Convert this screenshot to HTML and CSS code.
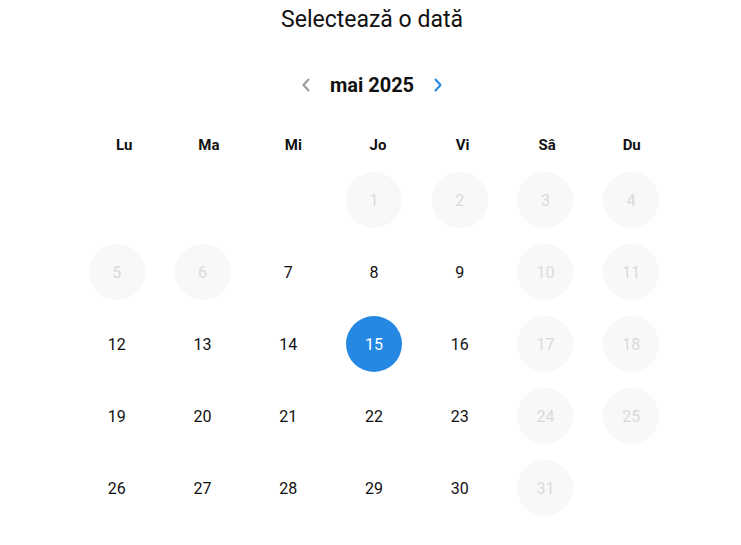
FILE: index.html
```html
<!DOCTYPE html>
<html lang="ro">
<head>
<meta charset="utf-8">
<title>Selectează o dată</title>
<link rel="stylesheet" href="styles.css">
</head>
<body>
<div class="picker">
  <h1 class="title">Selectează o dată</h1>
  <div class="nav">
    <button class="arrow prev" aria-label="Luna anterioară">
      <svg width="10" height="14" viewBox="0 0 10 14"><path d="M7.5 1.5 L2.5 7 L7.5 12.5" fill="none" stroke="currentColor" stroke-width="2" stroke-linecap="round" stroke-linejoin="round"/></svg>
    </button>
    <span class="month">mai 2025</span>
    <button class="arrow next" aria-label="Luna următoare">
      <svg width="10" height="14" viewBox="0 0 10 14"><path d="M2.5 1.5 L7.5 7 L2.5 12.5" fill="none" stroke="currentColor" stroke-width="2" stroke-linecap="round" stroke-linejoin="round"/></svg>
    </button>
  </div>
  <div class="weekdays">
    <span>Lu</span><span>Ma</span><span>Mi</span><span>Jo</span><span>Vi</span><span>Sâ</span><span>Du</span>
  </div>
  <div class="days">
    <span class="cell"></span><span class="cell"></span><span class="cell"></span>
    <span class="cell"><span class="day off">1</span></span>
    <span class="cell"><span class="day off">2</span></span>
    <span class="cell"><span class="day off">3</span></span>
    <span class="cell"><span class="day off">4</span></span>
    <span class="cell"><span class="day off">5</span></span>
    <span class="cell"><span class="day off">6</span></span>
    <span class="cell"><span class="day">7</span></span>
    <span class="cell"><span class="day">8</span></span>
    <span class="cell"><span class="day">9</span></span>
    <span class="cell"><span class="day off">10</span></span>
    <span class="cell"><span class="day off">11</span></span>
    <span class="cell"><span class="day">12</span></span>
    <span class="cell"><span class="day">13</span></span>
    <span class="cell"><span class="day">14</span></span>
    <span class="cell"><span class="day selected">15</span></span>
    <span class="cell"><span class="day">16</span></span>
    <span class="cell"><span class="day off">17</span></span>
    <span class="cell"><span class="day off">18</span></span>
    <span class="cell"><span class="day">19</span></span>
    <span class="cell"><span class="day">20</span></span>
    <span class="cell"><span class="day">21</span></span>
    <span class="cell"><span class="day">22</span></span>
    <span class="cell"><span class="day">23</span></span>
    <span class="cell"><span class="day off">24</span></span>
    <span class="cell"><span class="day off">25</span></span>
    <span class="cell"><span class="day">26</span></span>
    <span class="cell"><span class="day">27</span></span>
    <span class="cell"><span class="day">28</span></span>
    <span class="cell"><span class="day">29</span></span>
    <span class="cell"><span class="day">30</span></span>
    <span class="cell"><span class="day off">31</span></span>
    <span class="cell"></span>
  </div>
</div>
</body>
</html>
```
FILE: styles.css
```css
* { box-sizing: border-box; }
html, body { margin: 0; padding: 0; background: #fff; }
body {
  font-family: Roboto, "Liberation Sans", Arial, sans-serif;
  color: #111;
}
.picker {
  width: 600px;
  margin-left: 74px;
}
.title {
  margin: 0;
  padding-right: 4px;
  height: 40px;
  line-height: 40px;
  text-align: center;
  font-size: 23px;
  font-weight: 400;
  color: #111;
}
.nav {
  margin-top: 25px;
  padding-right: 4px;
  height: 40px;
  display: flex;
  align-items: center;
  justify-content: center;
  gap: 18px;
}
.arrow {
  border: 0;
  background: none;
  padding: 0;
  width: 12px;
  height: 20px;
  display: flex;
  align-items: center;
  justify-content: center;
  cursor: pointer;
}
.prev { color: #9a9a9a; }
.next { color: #2589e4; }
.month {
  font-size: 20px;
  font-weight: 700;
  color: #111;
}
.weekdays {
  margin-top: 25px;
  margin-left: 8px;
  height: 30px;
  display: grid;
  grid-template-columns: repeat(7, 1fr);
  align-items: center;
  text-align: center;
  font-size: 15px;
  font-weight: 700;
  color: #111;
}
.days {
  margin-top: 4px;
  display: grid;
  grid-template-columns: repeat(7, 1fr);
  grid-auto-rows: 72px;
}
.cell {
  display: flex;
  align-items: center;
  justify-content: center;
}
.day {
  width: 56px;
  height: 56px;
  border-radius: 50%;
  display: flex;
  align-items: center;
  justify-content: center;
  font-size: 16px;
  color: #111;
}
.day.off {
  background: #f8f8f8;
  color: #dadada;
}
.day.selected {
  background: #2589e4;
  color: #fff;
}
```
